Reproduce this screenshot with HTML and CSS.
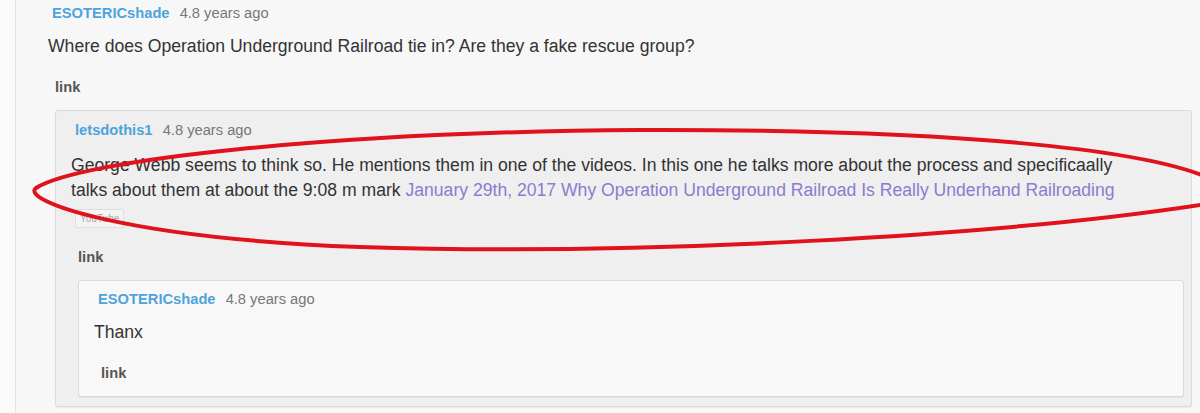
FILE: index.html
```html
<!DOCTYPE html>
<html lang="en">
<head>
  <meta charset="UTF-8" />
  <meta name="viewport" content="width=device-width, initial-scale=1.0"/>
  <title>Comment thread</title>
  <link rel="stylesheet" href="styles.css">
</head>
<body>

<div class="page">
  <div class="thread">
    <div class="comment-head">
      <a class="author">ESOTERICshade</a>
      <span class="age">4.8 years ago</span>
    </div>
    <p class="comment-text">Where does Operation Underground Railroad tie in? Are they a fake rescue group?</p>
    <div class="comment-links"><a>link</a></div>

    <div class="children">
      <div class="comment level-1">
        <div class="comment-head">
          <a class="author">letsdothis1</a>
          <span class="age">4.8 years ago</span>
        </div>
        <p class="comment-text">George Webb seems to think so. He mentions them in one of the videos. In this one he talks more about the process and specificaally<br>talks about them at about the 9:08 m mark <a class="ext">January 29th, 2017 Why Operation Underground Railroad Is Really Underhand Railroading</a></p>
        <span class="embed-tag">YouTube</span>
        <div class="comment-links"><a>link</a></div>

        <div class="children">
          <div class="comment level-2">
            <div class="comment-head">
              <a class="author">ESOTERICshade</a>
              <span class="age">4.8 years ago</span>
            </div>
            <p class="comment-text">Thanx</p>
            <div class="comment-links"><a>link</a></div>
          </div>
        </div>
      </div>
    </div>
  </div>

  <!-- red marker circle drawn over the reply -->
  <svg class="marker" width="1200" height="413" viewBox="0 0 1200 413">
    <path d="M1204 176 C1140 150 960 129 640 130 C330 132 80 160 36 188 C20 200 120 238 360 247 C640 256 1000 236 1206 204"
          fill="none" stroke="#e0121c" stroke-width="4" stroke-linecap="round"/>
  </svg>
</div>

</body>
</html>
```

FILE: styles.css
```css
body {
  margin: 0;
  background: #fafafa;
  font-family: 'Liberation Sans', Arial, sans-serif;
  color: #333;
}

.page {
  position: relative;
  height: 413px;
  overflow: hidden;
  padding-left: 15px;
}

.thread {
  background: #f7f7f7;
  border-left: 1px solid #e2e2e2;
  padding: 3px 8px 0 32px;
  min-height: 420px;
}

.comment-head {
  padding-left: 4px;
  line-height: 20px;
  font-size: 14.7px;
}

.author {
  color: #4ea3dc;
  font-weight: bold;
  margin-right: 6px;
}

.age {
  color: #777;
}

.comment-text {
  margin: 11px 0 18px;
  font-size: 17.6px;
  line-height: 25px;
}

.level-1 > .comment-text {
  margin-top: 13px;
}

.ext {
  color: #8a7ccf;
}

.embed-tag {
  display: inline-block;
  margin: -12px 0 0 4px;
  padding: 0 4px;
  height: 17px;
  line-height: 17px;
  border: 1px solid #dedede;
  border-radius: 2px;
  background: #f4f4f4;
  color: #aaa;
  font-size: 10px;
  vertical-align: top;
}

.comment-links {
  padding-left: 7px;
  line-height: 20px;
  margin-bottom: 13px;
  font-size: 14.7px;
}

.level-1 > .comment-links {
  margin-top: 8px;
}

.comment-links a {
  color: #555;
  font-weight: bold;
}

.children {
  margin-left: 7px;
}

.comment {
  border: 1px solid #dadada;
  border-radius: 3px;
  padding: 9px 7px 9px 15px;
  box-shadow: 0 1px 1px rgba(0, 0, 0, 0.05);
}

.level-1 {
  background: #efefef;
}

.level-2 {
  background: #f8f8f8;
  padding-top: 8px;
  padding-bottom: 0;
}

.marker {
  position: absolute;
  top: 0;
  left: 0;
  pointer-events: none;
}
```
